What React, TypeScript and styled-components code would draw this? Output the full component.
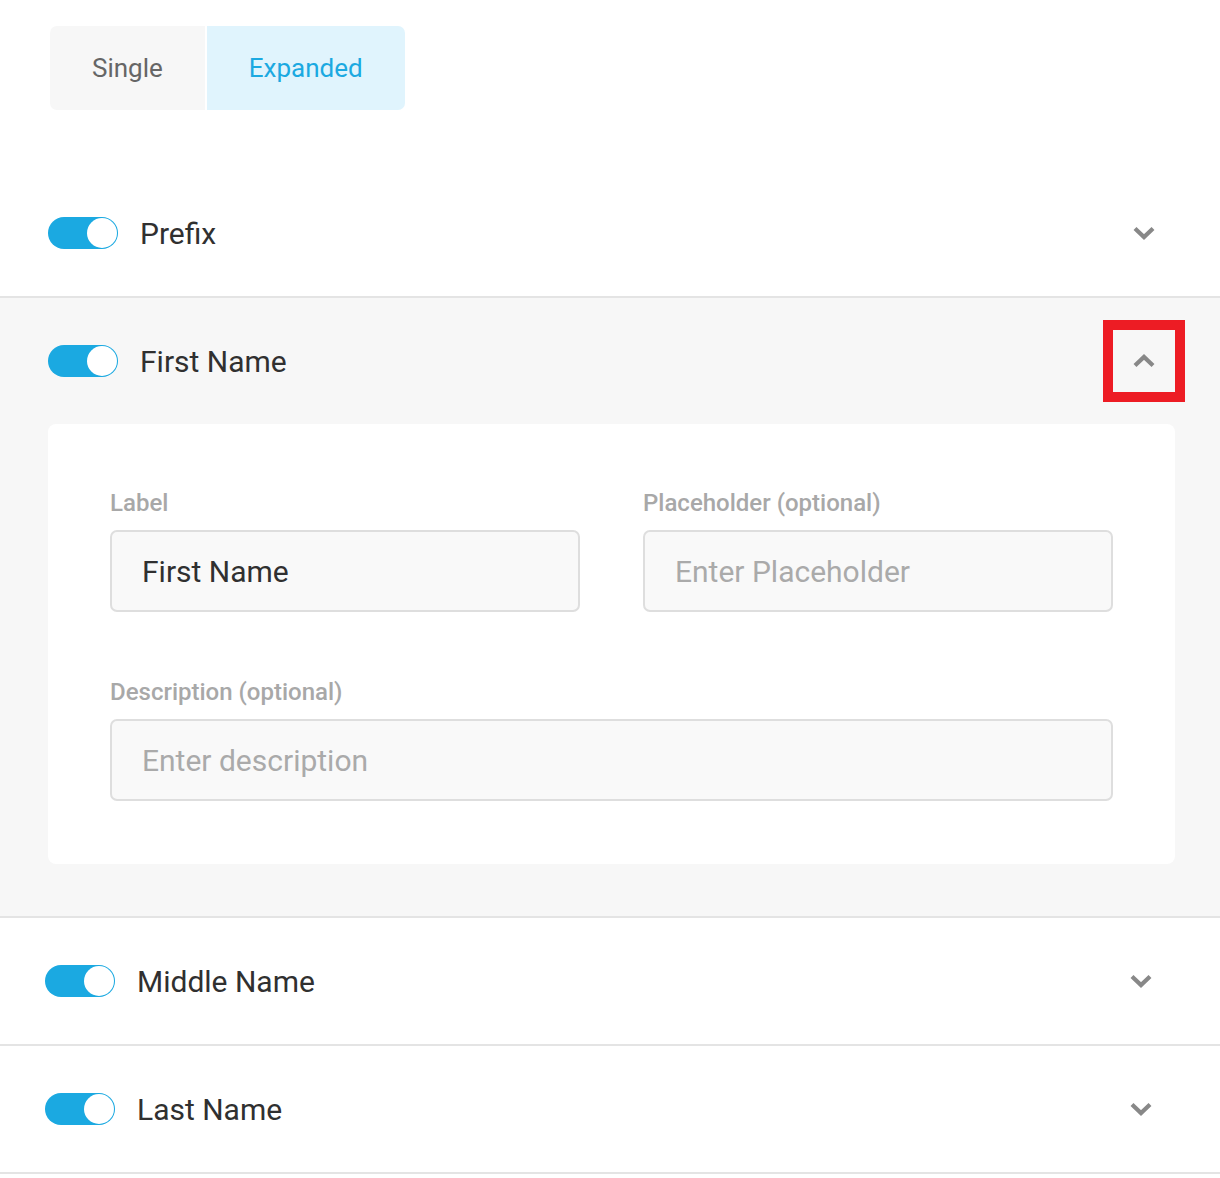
import React, { useState } from "react";
import styled, { createGlobalStyle } from "styled-components";

const GlobalStyle = createGlobalStyle`
  body {
    margin: 0;
    background: #fff;
    font-family: Roboto, "Liberation Sans", Arial, sans-serif;
  }
`;

type Field = { name: string; open?: boolean; shift?: boolean };

const fields: Field[] = [
  { name: "Prefix" },
  { name: "First Name", open: true },
  { name: "Middle Name", shift: true },
  { name: "Last Name", shift: true },
];

const ChevronIcon = ({ up }: { up?: boolean }) => (
  <svg width="24" height="16" viewBox="0 0 24 16">
    <polyline
      points={up ? "3,12.5 12,4 21,12.5" : "3,3.5 12,12 21,3.5"}
      fill="none"
      stroke="#888"
      strokeWidth="4.2"
      strokeLinejoin="miter"
    />
  </svg>
);

const App = () => {
  const [mode, setMode] = useState("Expanded");

  return (
    <>
      <GlobalStyle />
      <StylePage>
        <StyleTabs>
          {["Single", "Expanded"].map((m) => (
            <StyleTab key={m} $active={mode === m} onClick={() => setMode(m)}>
              {m}
            </StyleTab>
          ))}
        </StyleTabs>

        <StyleList>
          {fields.map((f) => (
            <StyleSection key={f.name} $open={f.open}>
              <StyleHeader $shift={f.shift}>
                <StyleToggle>
                  <StyleKnob />
                </StyleToggle>
                <StyleTitle>{f.name}</StyleTitle>
                <StyleChevronBtn $marked={f.open}>
                  <ChevronIcon up={f.open} />
                </StyleChevronBtn>
              </StyleHeader>
              {f.open && (
                <StyleCard>
                  <StyleGrid>
                    <StyleGroup>
                      <StyleLabel>Label</StyleLabel>
                      <StyleInput defaultValue="First Name" />
                    </StyleGroup>
                    <StyleGroup>
                      <StyleLabel>Placeholder (optional)</StyleLabel>
                      <StyleInput placeholder="Enter Placeholder" />
                    </StyleGroup>
                  </StyleGrid>
                  <StyleGroup>
                    <StyleLabel>Description (optional)</StyleLabel>
                    <StyleInput placeholder="Enter description" />
                  </StyleGroup>
                </StyleCard>
              )}
            </StyleSection>
          ))}
        </StyleList>
      </StylePage>
    </>
  );
};

const StylePage = styled.div`
  padding-top: 26px;
`;

const StyleTabs = styled.div`
  display: flex;
  gap: 2px;
  margin-left: 50px;
`;

const StyleTab = styled.div<{ $active?: boolean }>`
  height: 84px;
  padding: 0 42px;
  display: flex;
  align-items: center;
  font-size: 26px;
  cursor: pointer;
  background: ${(p) => (p.$active ? "#e0f4fd" : "#f7f7f7")};
  color: ${(p) => (p.$active ? "#1ba9e1" : "#666")};

  &:first-child {
    border-radius: 7px 0 0 7px;
  }
  &:last-child {
    border-radius: 0 7px 7px 0;
  }
`;

const StyleList = styled.div`
  margin-top: 60px;
`;

const StyleSection = styled.div<{ $open?: boolean }>`
  background: ${(p) => (p.$open ? "#f7f7f7" : "#fff")};
  border-bottom: 2px solid #e4e4e4;
  padding-bottom: ${(p) => (p.$open ? "52px" : "0")};
`;

const StyleHeader = styled.div<{ $shift?: boolean }>`
  height: 126px;
  display: flex;
  align-items: center;
  padding: ${(p) => (p.$shift ? "0 38px 0 45px" : "0 35px 0 48px")};
  box-sizing: border-box;
`;

const StyleToggle = styled.div`
  width: 70px;
  height: 32px;
  border-radius: 16px;
  background: #1ba9e1;
  display: flex;
  align-items: center;
  justify-content: flex-end;
  padding: 0 1px;
  box-sizing: border-box;
  flex-shrink: 0;
`;

const StyleKnob = styled.div`
  width: 30px;
  height: 30px;
  border-radius: 50%;
  background: #fff;
  box-sizing: border-box;
`;

const StyleTitle = styled.div`
  margin-left: 22px;
  flex: 1;
  font-size: 30px;
  color: #303030;
  padding-top: 1px;
`;

const StyleChevronBtn = styled.div<{ $marked?: boolean }>`
  width: 82px;
  height: 82px;
  box-sizing: border-box;
  border: 10px solid ${(p) => (p.$marked ? "#ed1c24" : "transparent")};
  display: flex;
  align-items: center;
  justify-content: center;
  cursor: pointer;
`;

const StyleCard = styled.div`
  margin: 0 45px 0 48px;
  background: #fff;
  border-radius: 8px;
  padding: 65px 62px 63px;
  display: flex;
  flex-direction: column;
  gap: 66px;
`;

const StyleGrid = styled.div`
  display: grid;
  grid-template-columns: 1fr 1fr;
  column-gap: 63px;
`;

const StyleGroup = styled.div`
  display: flex;
  flex-direction: column;
`;

const StyleLabel = styled.div`
  font-size: 24px;
  line-height: 28px;
  font-weight: 500;
  color: #a8a8a8;
  margin-bottom: 13px;
`;

const StyleInput = styled.input`
  height: 82px;
  box-sizing: border-box;
  border: 2px solid #dedede;
  border-radius: 7px;
  background: #f9f9f9;
  padding: 0 30px;
  font-family: Roboto, "Liberation Sans", Arial, sans-serif;
  font-size: 30px;
  color: #303030;
  outline: none;

  &::placeholder {
    color: #aaa;
  }
`;

export default App;
